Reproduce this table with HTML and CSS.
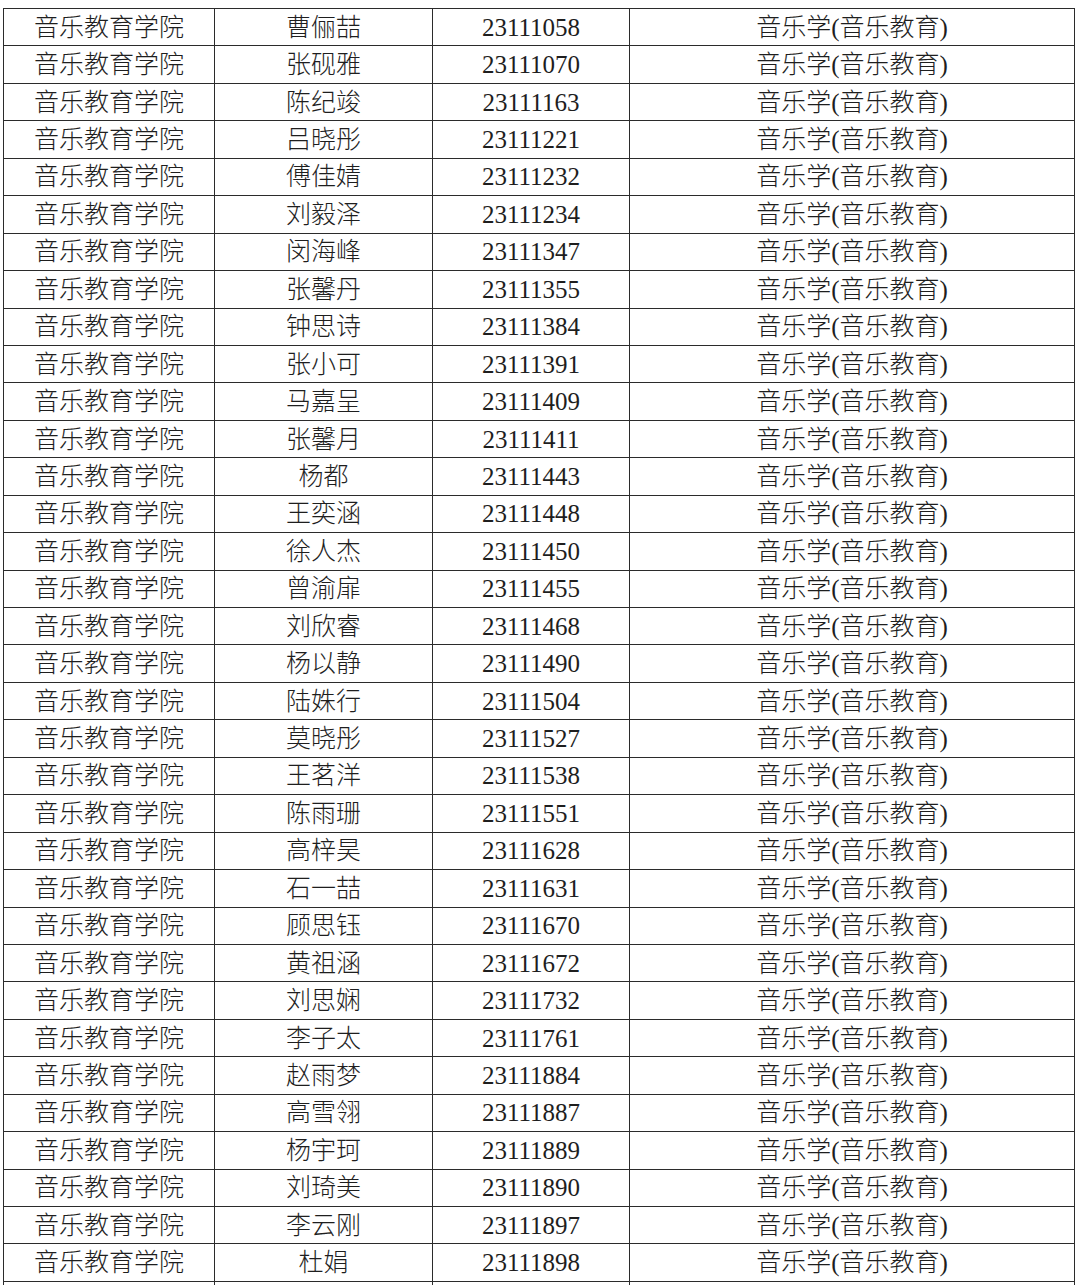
FILE: index.html
```html
<!DOCTYPE html>
<html lang="zh-CN">
<head>
<meta charset="utf-8">
<title>名单</title>
<link rel="stylesheet" href="styles.css">
</head>
<body>
<table class="roster">
<colgroup><col class="c-college"><col class="c-name"><col class="c-id"><col class="c-major"></colgroup>
<tbody>
<tr><td>音乐教育学院</td><td>曹俪喆</td><td>23111058</td><td>音乐学(音乐教育)</td></tr>
<tr><td>音乐教育学院</td><td>张砚雅</td><td>23111070</td><td>音乐学(音乐教育)</td></tr>
<tr><td>音乐教育学院</td><td>陈纪竣</td><td>23111163</td><td>音乐学(音乐教育)</td></tr>
<tr><td>音乐教育学院</td><td>吕晓彤</td><td>23111221</td><td>音乐学(音乐教育)</td></tr>
<tr><td>音乐教育学院</td><td>傅佳婧</td><td>23111232</td><td>音乐学(音乐教育)</td></tr>
<tr><td>音乐教育学院</td><td>刘毅泽</td><td>23111234</td><td>音乐学(音乐教育)</td></tr>
<tr><td>音乐教育学院</td><td>闵海峰</td><td>23111347</td><td>音乐学(音乐教育)</td></tr>
<tr><td>音乐教育学院</td><td>张馨丹</td><td>23111355</td><td>音乐学(音乐教育)</td></tr>
<tr><td>音乐教育学院</td><td>钟思诗</td><td>23111384</td><td>音乐学(音乐教育)</td></tr>
<tr><td>音乐教育学院</td><td>张小可</td><td>23111391</td><td>音乐学(音乐教育)</td></tr>
<tr><td>音乐教育学院</td><td>马嘉呈</td><td>23111409</td><td>音乐学(音乐教育)</td></tr>
<tr><td>音乐教育学院</td><td>张馨月</td><td>23111411</td><td>音乐学(音乐教育)</td></tr>
<tr><td>音乐教育学院</td><td>杨都</td><td>23111443</td><td>音乐学(音乐教育)</td></tr>
<tr><td>音乐教育学院</td><td>王奕涵</td><td>23111448</td><td>音乐学(音乐教育)</td></tr>
<tr><td>音乐教育学院</td><td>徐人杰</td><td>23111450</td><td>音乐学(音乐教育)</td></tr>
<tr><td>音乐教育学院</td><td>曾渝扉</td><td>23111455</td><td>音乐学(音乐教育)</td></tr>
<tr><td>音乐教育学院</td><td>刘欣睿</td><td>23111468</td><td>音乐学(音乐教育)</td></tr>
<tr><td>音乐教育学院</td><td>杨以静</td><td>23111490</td><td>音乐学(音乐教育)</td></tr>
<tr><td>音乐教育学院</td><td>陆姝行</td><td>23111504</td><td>音乐学(音乐教育)</td></tr>
<tr><td>音乐教育学院</td><td>莫晓彤</td><td>23111527</td><td>音乐学(音乐教育)</td></tr>
<tr><td>音乐教育学院</td><td>王茗洋</td><td>23111538</td><td>音乐学(音乐教育)</td></tr>
<tr><td>音乐教育学院</td><td>陈雨珊</td><td>23111551</td><td>音乐学(音乐教育)</td></tr>
<tr><td>音乐教育学院</td><td>高梓昊</td><td>23111628</td><td>音乐学(音乐教育)</td></tr>
<tr><td>音乐教育学院</td><td>石一喆</td><td>23111631</td><td>音乐学(音乐教育)</td></tr>
<tr><td>音乐教育学院</td><td>顾思钰</td><td>23111670</td><td>音乐学(音乐教育)</td></tr>
<tr><td>音乐教育学院</td><td>黄祖涵</td><td>23111672</td><td>音乐学(音乐教育)</td></tr>
<tr><td>音乐教育学院</td><td>刘思娴</td><td>23111732</td><td>音乐学(音乐教育)</td></tr>
<tr><td>音乐教育学院</td><td>李子太</td><td>23111761</td><td>音乐学(音乐教育)</td></tr>
<tr><td>音乐教育学院</td><td>赵雨梦</td><td>23111884</td><td>音乐学(音乐教育)</td></tr>
<tr><td>音乐教育学院</td><td>高雪翎</td><td>23111887</td><td>音乐学(音乐教育)</td></tr>
<tr><td>音乐教育学院</td><td>杨宇珂</td><td>23111889</td><td>音乐学(音乐教育)</td></tr>
<tr><td>音乐教育学院</td><td>刘琦美</td><td>23111890</td><td>音乐学(音乐教育)</td></tr>
<tr><td>音乐教育学院</td><td>李云刚</td><td>23111897</td><td>音乐学(音乐教育)</td></tr>
<tr><td>音乐教育学院</td><td>杜娟</td><td>23111898</td><td>音乐学(音乐教育)</td></tr>
<tr><td></td><td></td><td></td><td></td></tr>
</tbody>
</table>
</body>
</html>
```

FILE: styles.css
```css
html, body {
  margin: 0;
  background: #ffffff;
}
body {
  padding: 8px 0 0 3px;
  font-family: "Liberation Serif", "Noto Sans CJK SC", serif;
  color: #1e1e1e;
}
.roster {
  border-collapse: collapse;
  table-layout: fixed;
  width: 1071px;
}
.c-college { width: 211px; }
.c-name { width: 218px; }
.c-id { width: 197px; }
.c-major { width: 445px; }
.roster td {
  border: 1px solid #2b2b2b;
  height: 36.44px;
  padding: 0;
  font-size: 25px;
  line-height: 1;
  font-weight: 300;
  text-align: center;
  vertical-align: middle;
  white-space: nowrap;
}
```
